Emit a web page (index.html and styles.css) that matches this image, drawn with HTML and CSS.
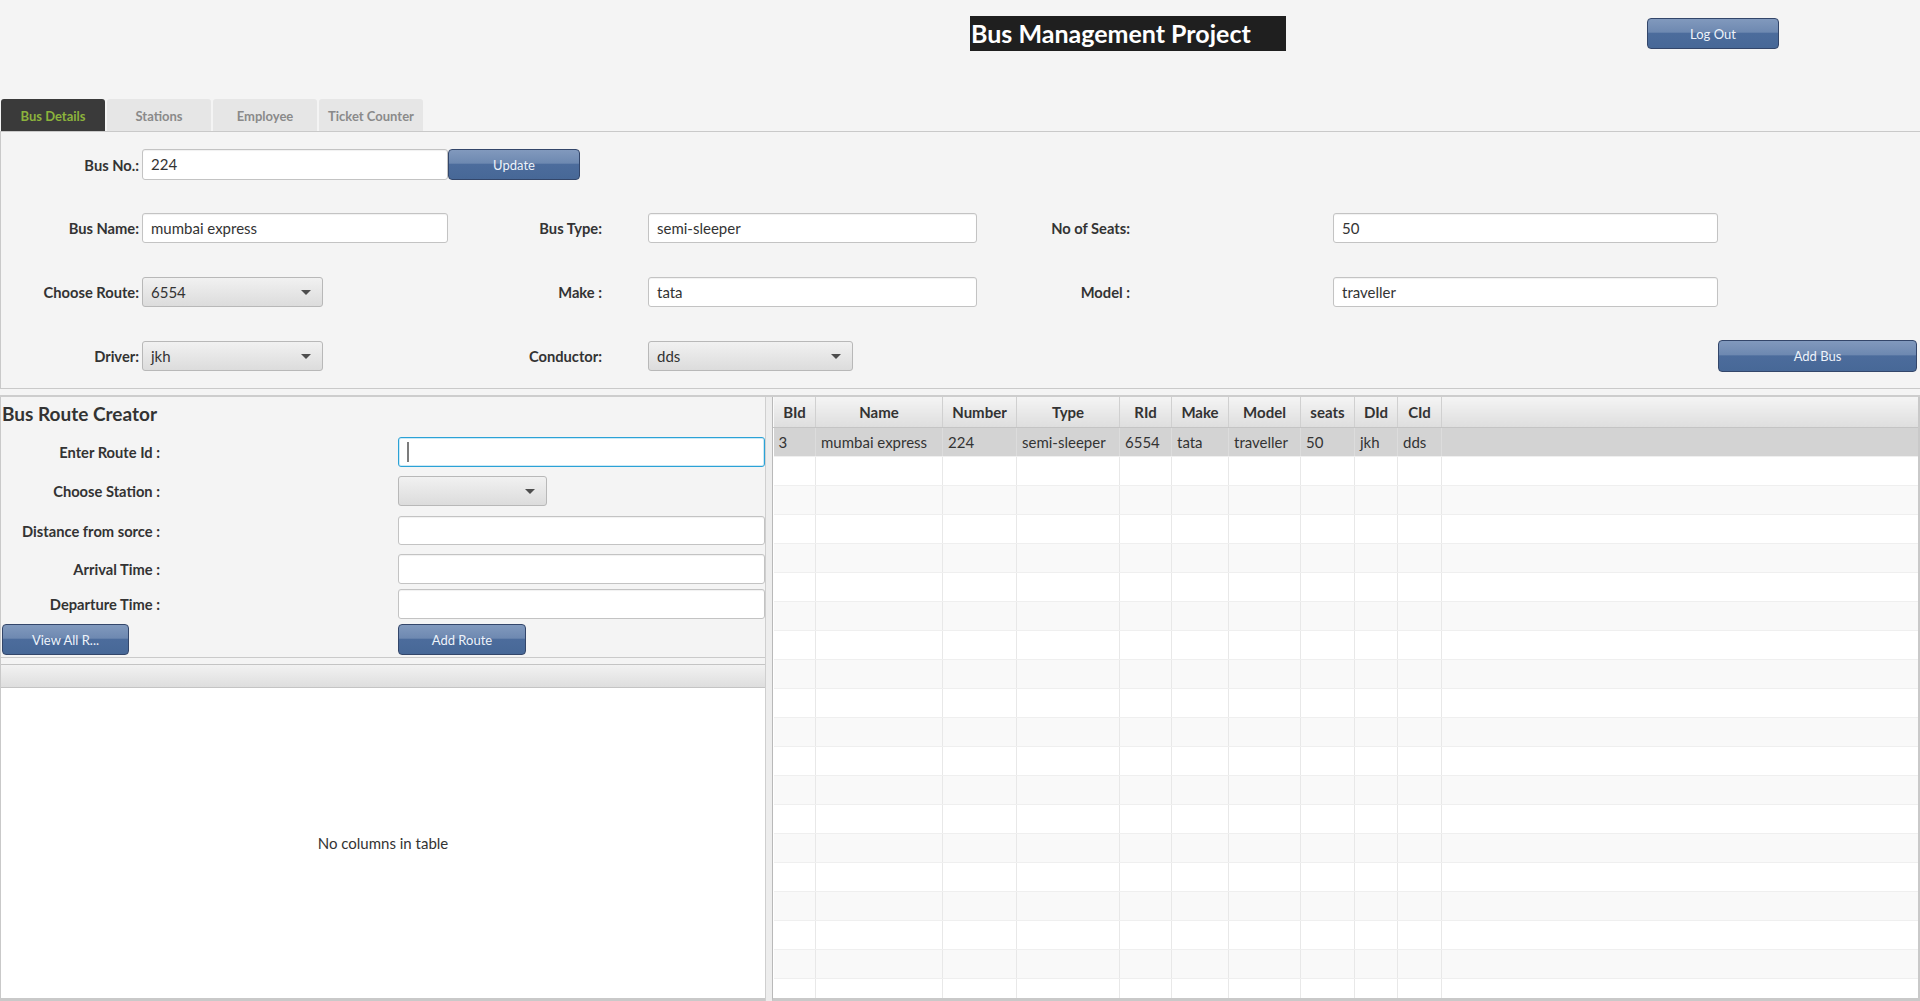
FILE: index.html
```
<!DOCTYPE html>
<html>
<head>
<meta charset="utf-8">
<title>Bus Management Project</title>
<link rel="stylesheet" href="styles.css">
</head>
<body>
<div class="app">
  <header class="header">
    <div class="spacer"></div>
    <div class="title">Bus Management Project</div>
    <div class="spacer"></div>
    <button class="btn logout">Log Out</button>
  </header>

  <nav class="tabs">
    <div class="tab active">Bus Details</div>
    <div class="tab">Stations</div>
    <div class="tab">Employee</div>
    <div class="tab">Ticket Counter</div>
  </nav>

  <section class="pane">
    <div class="row-first">
      <label class="lbl lbl1">Bus No.:</label>
      <div class="field f1">224</div>
      <button class="btn update">Update</button>
    </div>
    <div class="form-grid">
      <label class="lbl lbl1">Bus Name:</label>
      <div class="cell"><div class="field f1">mumbai express</div></div>
      <label class="lbl lbl2">Bus Type:</label>
      <div class="cell"><div class="field f2">semi-sleeper</div></div>
      <label class="lbl lbl3">No of Seats:</label>
      <div class="cell"><div class="field f3">50</div></div>
      <div class="cell"></div>

      <label class="lbl lbl1">Choose Route:</label>
      <div class="cell"><div class="combo c1"><span class="combo-text">6554</span><span class="arrow"></span></div></div>
      <label class="lbl lbl2">Make :</label>
      <div class="cell"><div class="field f2">tata</div></div>
      <label class="lbl lbl3">Model :</label>
      <div class="cell"><div class="field f3">traveller</div></div>
      <div class="cell"></div>

      <label class="lbl lbl1">Driver:</label>
      <div class="cell"><div class="combo c1"><span class="combo-text">jkh</span><span class="arrow"></span></div></div>
      <label class="lbl lbl2">Conductor:</label>
      <div class="cell"><div class="combo c2"><span class="combo-text">dds</span><span class="arrow"></span></div></div>
      <div class="cell"></div>
      <div class="cell"></div>
      <div class="cell"><button class="btn addbus">Add Bus</button></div>
    </div>
  </section>

  <section class="lower">
    <div class="left">
      <h2 class="creator">Bus Route Creator</h2>
      <div class="rform">
        <div class="rrow r1">
          <label class="lbl rl">Enter Route Id :</label>
          <div class="field rf focus"><span class="caret"></span></div>
        </div>
        <div class="rrow r2">
          <label class="lbl rl">Choose Station :</label>
          <div class="combo c3"><span class="combo-text"></span><span class="arrow"></span></div>
        </div>
        <div class="rrow r3">
          <label class="lbl rl">Distance from sorce :</label>
          <div class="field rf"></div>
        </div>
        <div class="rrow r4">
          <label class="lbl rl">Arrival Time :</label>
          <div class="field rf"></div>
        </div>
        <div class="rrow r5">
          <label class="lbl rl">Departure Time :</label>
          <div class="field rf"></div>
        </div>
        <div class="rrow r6">
          <button class="btn viewall">View All R...</button>
          <button class="btn addroute">Add Route</button>
        </div>
      </div>
      <div class="sep"></div>
      <div class="empty-table">
        <div class="empty-head"></div>
        <div class="empty-body">No columns in table</div>
      </div>
    </div>
    <div class="divider"></div>
    <div class="right">
      <table class="grid">
        <colgroup>
          <col class="w42"><col class="w127"><col class="w74"><col class="w103"><col class="w52"><col class="w57"><col class="w72"><col class="w54"><col class="w43"><col class="w44"><col>
        </colgroup>
        <thead>
          <tr><th>BId</th><th>Name</th><th>Number</th><th>Type</th><th>RId</th><th>Make</th><th>Model</th><th>seats</th><th>DId</th><th>CId</th><th class="filler"></th></tr>
        </thead>
        <tbody>
          <tr class="sel"><td>3</td><td>mumbai express</td><td>224</td><td>semi-sleeper</td><td>6554</td><td>tata</td><td>traveller</td><td>50</td><td>jkh</td><td>dds</td><td class="filler"></td></tr>
          <tr><td></td><td></td><td></td><td></td><td></td><td></td><td></td><td></td><td></td><td></td><td class="filler"></td></tr>
          <tr><td></td><td></td><td></td><td></td><td></td><td></td><td></td><td></td><td></td><td></td><td class="filler"></td></tr>
          <tr><td></td><td></td><td></td><td></td><td></td><td></td><td></td><td></td><td></td><td></td><td class="filler"></td></tr>
          <tr><td></td><td></td><td></td><td></td><td></td><td></td><td></td><td></td><td></td><td></td><td class="filler"></td></tr>
          <tr><td></td><td></td><td></td><td></td><td></td><td></td><td></td><td></td><td></td><td></td><td class="filler"></td></tr>
          <tr><td></td><td></td><td></td><td></td><td></td><td></td><td></td><td></td><td></td><td></td><td class="filler"></td></tr>
          <tr><td></td><td></td><td></td><td></td><td></td><td></td><td></td><td></td><td></td><td></td><td class="filler"></td></tr>
          <tr><td></td><td></td><td></td><td></td><td></td><td></td><td></td><td></td><td></td><td></td><td class="filler"></td></tr>
          <tr><td></td><td></td><td></td><td></td><td></td><td></td><td></td><td></td><td></td><td></td><td class="filler"></td></tr>
          <tr><td></td><td></td><td></td><td></td><td></td><td></td><td></td><td></td><td></td><td></td><td class="filler"></td></tr>
          <tr><td></td><td></td><td></td><td></td><td></td><td></td><td></td><td></td><td></td><td></td><td class="filler"></td></tr>
          <tr><td></td><td></td><td></td><td></td><td></td><td></td><td></td><td></td><td></td><td></td><td class="filler"></td></tr>
          <tr><td></td><td></td><td></td><td></td><td></td><td></td><td></td><td></td><td></td><td></td><td class="filler"></td></tr>
          <tr><td></td><td></td><td></td><td></td><td></td><td></td><td></td><td></td><td></td><td></td><td class="filler"></td></tr>
          <tr><td></td><td></td><td></td><td></td><td></td><td></td><td></td><td></td><td></td><td></td><td class="filler"></td></tr>
          <tr><td></td><td></td><td></td><td></td><td></td><td></td><td></td><td></td><td></td><td></td><td class="filler"></td></tr>
          <tr><td></td><td></td><td></td><td></td><td></td><td></td><td></td><td></td><td></td><td></td><td class="filler"></td></tr>
          <tr><td></td><td></td><td></td><td></td><td></td><td></td><td></td><td></td><td></td><td></td><td class="filler"></td></tr>
          <tr><td></td><td></td><td></td><td></td><td></td><td></td><td></td><td></td><td></td><td></td><td class="filler"></td></tr>
        </tbody>
      </table>
    </div>
  </section>
</div>
</body>
</html>
```

FILE: styles.css
```
* { box-sizing: border-box; }

html, body {
  margin: 0;
  padding: 0;
  height: 1001px;
  overflow: hidden;
  background: #f4f4f4;
  font-family: Lato, "Open Sans", sans-serif;
  color: #333;
}

.app {
  width: 1920px;
  height: 1001px;
  display: flex;
  flex-direction: column;
}

/* header */
.header {
  height: 99px;
  display: grid;
  grid-template-columns: 970px 316px 361px 132px;
  align-items: start;
  padding-top: 16px;
}
.title {
  height: 35px;
  background: #1f1f1f;
  color: #fff;
  font-weight: 700;
  font-size: 25px;
  line-height: 34px;
  padding-left: 1px;
  white-space: nowrap;
}
.logout {
  margin-top: 2px;
  height: 31px;
}

/* buttons */
.btn {
  font-family: Lato, "Open Sans", sans-serif;
  font-size: 13px;
  color: #eef3fa;
  border: 1px solid #33466a;
  border-radius: 4px;
  background: linear-gradient(#8199bd 0%, #6e89b1 45%, #4c6c9c 50%, #476897 100%);
  padding: 0;
  cursor: pointer;
}

/* tabs */
.tabs {
  height: 32px;
  display: flex;
  gap: 2px;
  padding-left: 1px;
}
.tab {
  width: 104px;
  height: 32px;
  border-radius: 3px 3px 0 0;
  background: #e6e6e6;
  color: #8a8a8a;
  font-size: 13px;
  font-weight: 700;
  display: flex;
  align-items: center;
  justify-content: center;
  padding-top: 2px;
}
.tab.active {
  background: #3a3a3a;
  color: #8cb33c;
}

/* tab pane */
.pane {
  height: 258px;
  border: 1px solid #c9c9c9;
  border-right: none;
  padding-top: 17px;
}
.row-first {
  display: flex;
  align-items: center;
  height: 31px;
}
.lbl {
  font-weight: 700;
  font-size: 14.7px;
  color: #333;
  white-space: nowrap;
}
.lbl1 {
  width: 141px;
  text-align: right;
  padding-right: 3px;
}
.field {
  height: 30px;
  background: #fff;
  border: 1px solid #c3c3c3;
  border-radius: 3px;
  box-shadow: inset 0 1px 1px rgba(0,0,0,0.06);
  font-size: 15px;
  line-height: 28px;
  padding-left: 8px;
  color: #333;
  white-space: nowrap;
}
.row-first .field { height: 31px; }
.f1 { width: 306px; }
.f2 { width: 329px; }
.f3 { width: 385px; }
.update {
  width: 132px;
  height: 31px;
}

.form-grid {
  margin-top: 33px;
  display: grid;
  grid-template-columns: 141px 331px 175px 352px 333px 385px 200px;
  grid-auto-rows: 30px;
  row-gap: 34px;
  align-items: center;
}
.form-grid .lbl1 { width: auto; }
.cell { height: 30px; display: flex; align-items: center; }
.lbl2 {
  text-align: right;
  padding-right: 46px;
}
.lbl3 {
  text-align: right;
  padding-right: 203px;
}
.addbus {
  width: 199px;
  height: 32px;
}

/* combo */
.combo {
  height: 30px;
  border: 1px solid #b8b8b8;
  border-radius: 3px;
  background: linear-gradient(#f1f1f1, #dcdcdc);
  display: flex;
  align-items: center;
  padding-left: 8px;
  padding-right: 11px;
  font-size: 15px;
  color: #333;
}
.combo-text { flex: 1; }
.arrow {
  width: 0;
  height: 0;
  border-left: 5px solid transparent;
  border-right: 5px solid transparent;
  border-top: 5px solid #4d4d4d;
}
.c1 { width: 181px; }
.c2 { width: 205px; }
.c3 { width: 149px; }

/* lower */
.lower {
  flex: 1;
  margin-top: 6px;
  border-top: 2px solid #cdcdcd;
  display: grid;
  grid-template-columns: 766px 6px 1fr;
  min-height: 0;
}
.left {
  border-left: 1px solid #c9c9c9;
  border-right: 1px solid #cfcfcf;
  display: flex;
  flex-direction: column;
  min-height: 0;
}
.creator {
  margin: 0;
  height: 40px;
  font-size: 19px;
  font-weight: 700;
  line-height: 33px;
  padding-left: 1px;
  color: #333;
}
.rform { display: flex; flex-direction: column; }
.rrow {
  display: flex;
  align-items: center;
  height: 30px;
}
.r2 { margin-top: 9px; }
.r3 { margin-top: 10px; height: 29px; }
.r4 { margin-top: 9px; }
.r5 { margin-top: 5px; }
.r6 { margin-top: 5px; height: 31px; }
.rl {
  width: 397px;
  text-align: right;
  padding-right: 238px;
}
.rf {
  width: 367px;
  height: 100%;
}
.rf.focus {
  border: 1px solid #2ba2d6;
  box-shadow: inset 0 0 0 1px #cbe9f6;
  display: flex;
  align-items: center;
  padding-left: 8px;
}
.caret {
  width: 2px;
  height: 20px;
  background: #7c7c7c;
}
.viewall {
  margin-left: 1px;
  width: 127px;
  height: 31px;
}
.addroute {
  margin-left: 269px;
  width: 128px;
  height: 31px;
}
.sep {
  margin-top: 2px;
  border-top: 1px solid #cacaca;
}
.empty-table {
  flex: 1;
  margin-top: 6px;
  border-top: 1px solid #c4c4c4;
  border-bottom: 3px solid #c9c9c9;
  display: flex;
  flex-direction: column;
  min-height: 0;
}
.empty-head {
  height: 23px;
  background: linear-gradient(#f2f2f2, #dedede);
  border-bottom: 1px solid #c4c4c4;
}
.empty-body {
  flex: 1;
  background: #fff;
  display: flex;
  align-items: center;
  justify-content: center;
  font-size: 15px;
  color: #333;
}

.divider {
  background: #ededed;
}

.right {
  border-left: 1px solid #b9b9b9;
  border-right: 2px solid #c9c9c9;
  border-bottom: 3px solid #c9c9c9;
  overflow: hidden;
  background: #fff;
}
.grid {
  width: 100%;
  border-collapse: collapse;
  table-layout: fixed;
  font-size: 15px;
}
.w42 { width: 42px; }
.w127 { width: 127px; }
.w74 { width: 74px; }
.w103 { width: 103px; }
.w52 { width: 52px; }
.w57 { width: 57px; }
.w72 { width: 72px; }
.w54 { width: 54px; }
.w43 { width: 43px; }
.w44 { width: 44px; }
.grid th {
  height: 30px;
  padding: 0;
  font-weight: 700;
  color: #333;
  background: linear-gradient(#f4f4f4, #dedede);
  border-right: 1px solid #d0d0d0;
  border-left: 1px solid #fafafa;
  border-bottom: 1px solid #c4c4c4;
  text-align: center;
  white-space: nowrap;
}
.grid th.filler { border-right: none; }
.grid td {
  height: 29px;
  padding: 0 0 0 5px;
  border-right: 1px solid #e8e8e8;
  border-bottom: 1px solid #efefef;
  white-space: nowrap;
  overflow: hidden;
  color: #333;
}
.grid td.filler { border-right: none; }
.grid tbody tr:nth-child(odd) td { background: #f9f9f9; }
.grid tbody tr:nth-child(even) td { background: #ffffff; }
.grid tbody tr.sel td { background: #d3d3d3; border-right-color: #dcdcdc; }
```
